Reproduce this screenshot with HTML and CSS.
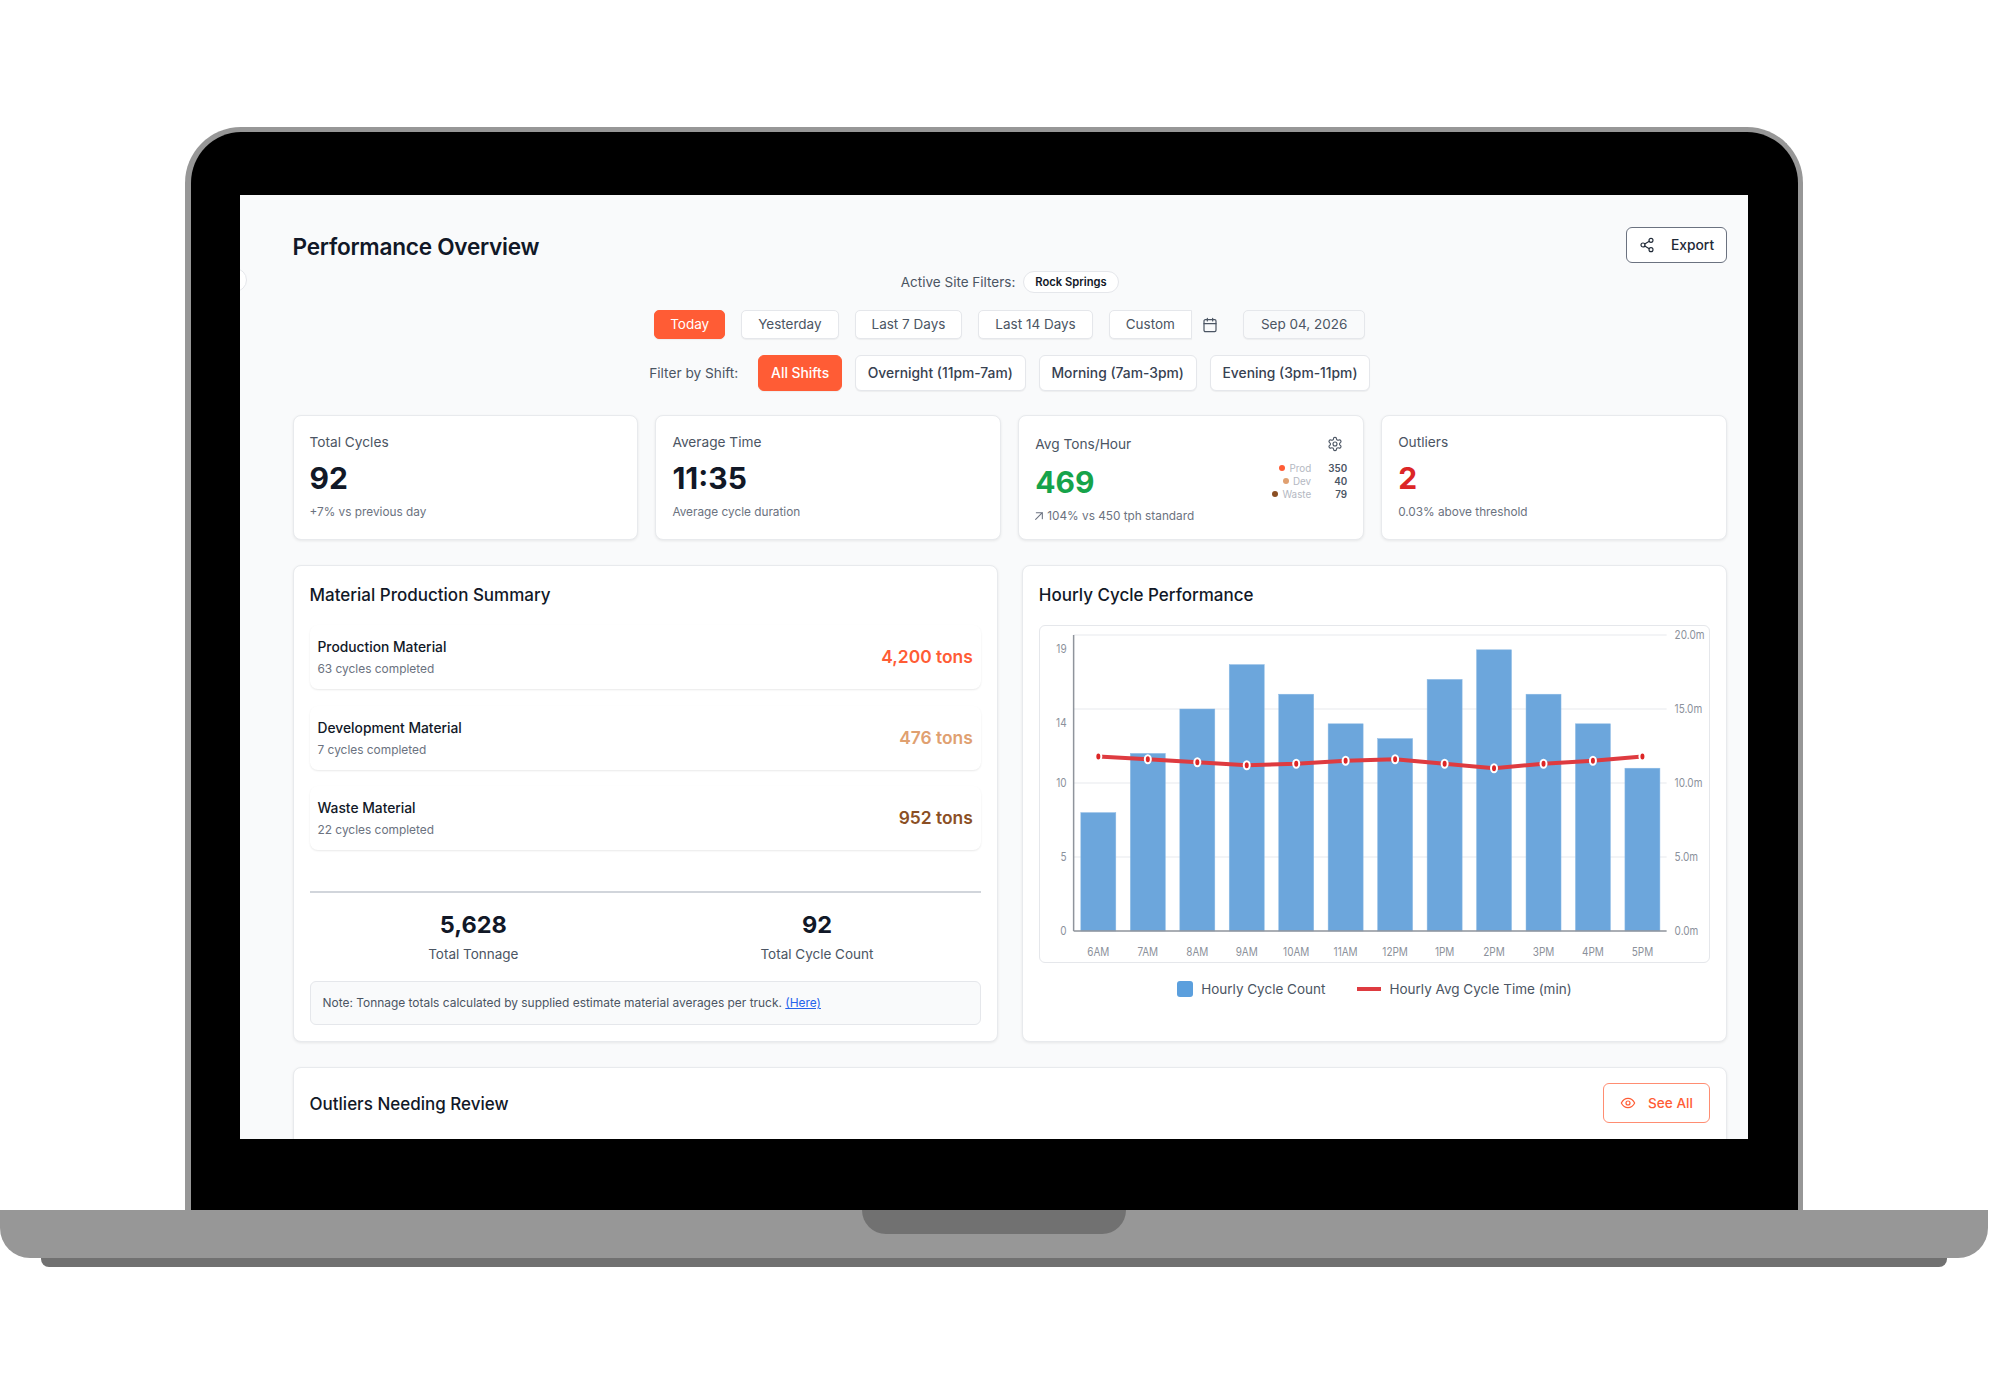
FILE: index.html
```html
<!DOCTYPE html>
<html lang="en">
<head>
    <meta charset="UTF-8">
    <meta name="viewport" content="width=device-width, initial-scale=1.0">
    <title>Performance Overview</title>
    <link rel="stylesheet" href="styles.css">
</head>
<body>
    <div class="laptop">
        <div class="lid">
            <div class="screen">
                <span class="sidebar-toggle"></span>

                <div class="page-header">
                    <h1>Performance Overview</h1>
                    <button class="export-btn">
                        <svg class="icon" viewBox="0 0 24 24"><circle cx="18" cy="5" r="3"/><circle cx="6" cy="12" r="3"/><circle cx="18" cy="19" r="3"/><path d="M8.59 13.51l6.83 3.98M15.41 6.51l-6.82 3.98"/></svg>
                        Export
                    </button>
                </div>

                <div class="site-filters">
                    <span>Active Site Filters:</span>
                    <span class="site-pill">Rock Springs</span>
                </div>

                <div class="date-filters">
                    <button class="filter-btn today-btn active">Today</button>
                    <button class="filter-btn">Yesterday</button>
                    <button class="filter-btn">Last 7 Days</button>
                    <button class="filter-btn">Last 14 Days</button>
                    <div class="custom-range">
                        <button class="filter-btn custom-btn">Custom</button>
                        <svg class="icon calendar" viewBox="0 0 24 24"><rect x="3" y="4" width="18" height="18" rx="2"/><path d="M16 2v4M8 2v4M3 10h18"/></svg>
                        <button class="filter-btn date-btn">Sep 04, 2026</button>
                    </div>
                </div>

                <div class="shift-filters">
                    <span class="shift-label">Filter by Shift:</span>
                    <button class="shift-btn active">All Shifts</button>
                    <button class="shift-btn">Overnight (11pm-7am)</button>
                    <button class="shift-btn">Morning (7am-3pm)</button>
                    <button class="shift-btn">Evening (3pm-11pm)</button>
                </div>

                <div class="stat-grid">
                    <div class="stat-card">
                        <div class="stat-label">Total Cycles</div>
                        <div class="stat-value">92</div>
                        <div class="stat-sub">+7% vs previous day</div>
                    </div>
                    <div class="stat-card">
                        <div class="stat-label">Average Time</div>
                        <div class="stat-value">11:35</div>
                        <div class="stat-sub">Average cycle duration</div>
                    </div>
                    <div class="stat-card tons-card">
                        <div class="tons-head">
                            <div class="stat-label">Avg Tons/Hour</div>
                            <svg class="icon gear" viewBox="0 0 24 24"><path d="M12.22 2h-.44a2 2 0 0 0-2 2v.18a2 2 0 0 1-1 1.73l-.43.25a2 2 0 0 1-2 0l-.15-.08a2 2 0 0 0-2.73.73l-.22.38a2 2 0 0 0 .73 2.73l.15.1a2 2 0 0 1 1 1.72v.51a2 2 0 0 1-1 1.74l-.15.09a2 2 0 0 0-.73 2.73l.22.38a2 2 0 0 0 2.73.73l.15-.08a2 2 0 0 1 2 0l.43.25a2 2 0 0 1 1 1.73V20a2 2 0 0 0 2 2h.44a2 2 0 0 0 2-2v-.18a2 2 0 0 1 1-1.73l.43-.25a2 2 0 0 1 2 0l.15.08a2 2 0 0 0 2.73-.73l.22-.39a2 2 0 0 0-.73-2.73l-.15-.08a2 2 0 0 1-1-1.74v-.5a2 2 0 0 1 1-1.74l.15-.09a2 2 0 0 0 .73-2.73l-.22-.38a2 2 0 0 0-2.73-.73l-.15.08a2 2 0 0 1-2 0l-.43-.25a2 2 0 0 1-1-1.73V4a2 2 0 0 0-2-2z"/><circle cx="12" cy="12" r="3"/></svg>
                        </div>
                        <div class="tons-row">
                            <div class="stat-value green">469</div>
                            <div class="tons-table">
                                <span class="tons-name"><i class="dot prod"></i>Prod</span><b>350</b>
                                <span class="tons-name"><i class="dot dev"></i>Dev</span><b>40</b>
                                <span class="tons-name"><i class="dot waste"></i>Waste</span><b>79</b>
                            </div>
                        </div>
                        <div class="stat-sub tons-sub">
                            <svg class="icon trend" viewBox="6 6 12 12"><path d="M7 17L17 7M8 7h9v9"/></svg>
                            104% vs 450 tph standard
                        </div>
                    </div>
                    <div class="stat-card">
                        <div class="stat-label">Outliers</div>
                        <div class="stat-value red">2</div>
                        <div class="stat-sub">0.03% above threshold</div>
                    </div>
                </div>

                <div class="panel-grid">
                    <div class="panel">
                        <h2>Material Production Summary</h2>
                        <div class="material-list">
                            <div class="material-row">
                                <div>
                                    <div class="material-name">Production Material</div>
                                    <div class="material-sub">63 cycles completed</div>
                                </div>
                                <div class="material-tons prod-text">4,200 tons</div>
                            </div>
                            <div class="material-row">
                                <div>
                                    <div class="material-name">Development Material</div>
                                    <div class="material-sub">7 cycles completed</div>
                                </div>
                                <div class="material-tons dev-text">476 tons</div>
                            </div>
                            <div class="material-row">
                                <div>
                                    <div class="material-name">Waste Material</div>
                                    <div class="material-sub">22 cycles completed</div>
                                </div>
                                <div class="material-tons waste-text">952 tons</div>
                            </div>
                        </div>
                        <div class="totals">
                            <div>
                                <div class="total-value">5,628</div>
                                <div class="total-label">Total Tonnage</div>
                            </div>
                            <div>
                                <div class="total-value">92</div>
                                <div class="total-label">Total Cycle Count</div>
                            </div>
                        </div>
                        <div class="note">Note: Tonnage totals calculated by supplied estimate material averages per truck. <a href="#">(Here)</a></div>
                    </div>

                    <div class="panel">
                        <h2>Hourly Cycle Performance</h2>
                        <div class="chart-box">
                            <svg class="chart" viewBox="0 0 668 336">
                                <g transform="translate(0,1)">
                                    <path class="grid-line" d="M33 8H626M33 82H626M33 156H626M33 230H626"/>
                                    <g class="bars">
                                        <rect x="40.2" y="185.6" width="35" height="118.4"/>
                                        <rect x="89.7" y="126.4" width="35" height="177.6"/>
                                        <rect x="139.2" y="82" width="35" height="222"/>
                                        <rect x="188.6" y="37.6" width="35" height="266.4"/>
                                        <rect x="238.1" y="67.2" width="35" height="236.8"/>
                                        <rect x="287.5" y="96.8" width="35" height="207.2"/>
                                        <rect x="337" y="111.6" width="35" height="192.4"/>
                                        <rect x="386.5" y="52.4" width="35" height="251.6"/>
                                        <rect x="435.9" y="22.8" width="35" height="281.2"/>
                                        <rect x="485.4" y="67.2" width="35" height="236.8"/>
                                        <rect x="534.8" y="96.8" width="35" height="207.2"/>
                                        <rect x="584.3" y="141.2" width="35" height="162.8"/>
                                    </g>
                                    <path class="axis-line" d="M33 8V304M33 304H626"/>
                                    <polyline class="trend-line" points="57.7,129.4 107.2,132.3 156.7,135.3 206.1,138.2 255.6,136.8 305,133.8 354.5,132.3 404,136.8 453.4,141.2 502.9,136.8 552.3,133.8 601.8,129.4"/>
                                    <g class="points">
                                        <ellipse cx="57.7" cy="129.4" rx="3" ry="4"/>
                                        <ellipse cx="107.2" cy="132.3" rx="3" ry="4"/>
                                        <ellipse cx="156.7" cy="135.3" rx="3" ry="4"/>
                                        <ellipse cx="206.1" cy="138.2" rx="3" ry="4"/>
                                        <ellipse cx="255.6" cy="136.8" rx="3" ry="4"/>
                                        <ellipse cx="305" cy="133.8" rx="3" ry="4"/>
                                        <ellipse cx="354.5" cy="132.3" rx="3" ry="4"/>
                                        <ellipse cx="404" cy="136.8" rx="3" ry="4"/>
                                        <ellipse cx="453.4" cy="141.2" rx="3" ry="4"/>
                                        <ellipse cx="502.9" cy="136.8" rx="3" ry="4"/>
                                        <ellipse cx="552.3" cy="133.8" rx="3" ry="4"/>
                                        <ellipse cx="601.8" cy="129.4" rx="3" ry="4"/>
                                    </g>
                                    <g class="y-left">
                                        <text x="26" y="25">19</text>
                                        <text x="26" y="99">14</text>
                                        <text x="26" y="159">10</text>
                                        <text x="26" y="233">5</text>
                                        <text x="26" y="307">0</text>
                                    </g>
                                    <g class="y-right">
                                        <text x="634" y="11">20.0m</text>
                                        <text x="634" y="85">15.0m</text>
                                        <text x="634" y="159">10.0m</text>
                                        <text x="634" y="233">5.0m</text>
                                        <text x="634" y="307">0.0m</text>
                                    </g>
                                    <g class="x-labels">
                                        <text x="57.7" y="328">6AM</text>
                                        <text x="107.2" y="328">7AM</text>
                                        <text x="156.7" y="328">8AM</text>
                                        <text x="206.1" y="328">9AM</text>
                                        <text x="255.6" y="328">10AM</text>
                                        <text x="305" y="328">11AM</text>
                                        <text x="354.5" y="328">12PM</text>
                                        <text x="404" y="328">1PM</text>
                                        <text x="453.4" y="328">2PM</text>
                                        <text x="502.9" y="328">3PM</text>
                                        <text x="552.3" y="328">4PM</text>
                                        <text x="601.8" y="328">5PM</text>
                                    </g>
                                </g>
                            </svg>
                        </div>
                        <div class="legend">
                            <span class="legend-item"><i class="swatch-bar"></i>Hourly Cycle Count</span>
                            <span class="legend-item"><i class="swatch-line"></i>Hourly Avg Cycle Time (min)</span>
                        </div>
                    </div>
                </div>

                <div class="panel outliers">
                    <h2>Outliers Needing Review</h2>
                    <button class="see-all">
                        <svg class="icon" viewBox="0 0 24 24"><path d="M2 12s3.6-7 10-7 10 7 10 7-3.6 7-10 7-10-7-10-7z"/><circle cx="12" cy="12" r="3"/></svg>
                        See All
                    </button>
                </div>
            </div>
        </div>
        <div class="base"><div class="notch"></div></div>
        <div class="foot"></div>
    </div>
</body>
</html>
```

FILE: styles.css
```css
/* General Styling */
body {
    font-family: Inter, "Liberation Sans", sans-serif;
    background-color: #ffffff;
    color: #111827;
    margin: 0;
    padding: 0;
}

button {
    font-family: inherit;
    cursor: pointer;
}

.icon {
    fill: none;
    stroke: currentColor;
    stroke-width: 2;
    stroke-linecap: round;
    stroke-linejoin: round;
    flex-shrink: 0;
}

/* Laptop Frame */
.laptop {
    padding-top: 127px;
}

.lid {
    box-sizing: border-box;
    width: 1618px;
    height: 1083px;
    margin-left: 185px;
    padding: 63px 50px 71px 49px;
    background-color: #000000;
    border: solid #979797;
    border-width: 5px 5px 0 6px;
    border-radius: 56px 56px 0 0;
}

.base {
    position: relative;
    width: 1988px;
    height: 48px;
    background-color: #979797;
    border-radius: 0 0 30px 30px;
}

.notch {
    position: absolute;
    top: 0;
    left: 862px;
    width: 264px;
    height: 24px;
    background-color: #717171;
    border-radius: 0 0 24px 24px;
}

.foot {
    width: 1906px;
    height: 9px;
    margin-left: 41px;
    background-color: #717171;
    border-radius: 0 0 8px 8px;
}

/* Screen */
.screen {
    position: relative;
    box-sizing: border-box;
    height: 944px;
    padding: 32px 21px 0 52.5px;
    background-color: #f9fafb;
    overflow: hidden;
}

.sidebar-toggle {
    position: absolute;
    top: 73px;
    left: -17px;
    width: 22px;
    height: 22px;
    background-color: #ffffff;
    border: 1px solid #e5e7eb;
    border-radius: 50%;
}

/* Header */
.page-header {
    display: flex;
    justify-content: space-between;
    align-items: center;
    height: 36px;
}

h1 {
    margin: 2px 0 0;
    font-size: 22.6px;
    font-weight: 600;
    letter-spacing: -0.25px;
}

.export-btn {
    display: flex;
    align-items: center;
    gap: 16px;
    box-sizing: border-box;
    width: 101px;
    height: 36px;
    padding: 0 12px;
    background-color: #ffffff;
    color: #1f2937;
    border: 1px solid #6b7280;
    border-radius: 6px;
    font-size: 13.8px;
    font-weight: 500;
}

.export-btn .icon {
    width: 16px;
    height: 16px;
    stroke-width: 1.7;
}

/* Filters */
.site-filters {
    display: flex;
    justify-content: center;
    align-items: center;
    gap: 8px;
    margin-top: 8px;
    height: 22px;
    font-size: 13.5px;
    color: #4b5563;
}

.site-pill {
    display: flex;
    align-items: center;
    box-sizing: border-box;
    height: 22px;
    padding: 0 11px;
    background-color: #ffffff;
    color: #111827;
    border: 1px solid #e5e7eb;
    border-radius: 11px;
    font-size: 11.2px;
    font-weight: 600;
}

.date-filters,
.shift-filters {
    display: flex;
    justify-content: center;
    align-items: center;
}

.date-filters {
    gap: 16px;
    margin-top: 17px;
}

.filter-btn {
    box-sizing: border-box;
    height: 29px;
    padding: 0 16px 1px;
    background-color: #ffffff;
    color: #4b5563;
    border: 1px solid #e5e7eb;
    border-radius: 5px;
    box-shadow: 0 1px 1px rgba(0, 0, 0, 0.05);
    font-size: 13.5px;
}

.today-btn {
    padding: 0 15px 1px;
}

.filter-btn.active,
.shift-btn.active {
    background-color: #ff5c35;
    border-color: #ff5c35;
    color: #ffffff;
}

.custom-range {
    display: flex;
    align-items: center;
}

.custom-btn {
    border-radius: 5px 0 0 5px;
}

.calendar {
    width: 16px;
    height: 16px;
    margin: 0 25px 0 10px;
    color: #4b5563;
    stroke-width: 1.8;
}

.date-btn {
    padding: 0 17px 1px;
    background-color: #f9fafb;
}

.shift-filters {
    gap: 13px;
    margin-top: 16px;
}

.shift-label {
    margin-right: 7px;
    font-size: 13.7px;
    color: #4b5563;
}

.shift-btn {
    box-sizing: border-box;
    height: 36px;
    padding: 0 11.8px 1px;
    background-color: #ffffff;
    color: #374151;
    border: 1px solid #e5e7eb;
    border-radius: 6px;
    box-shadow: 0 1px 1px rgba(0, 0, 0, 0.05);
    font-size: 13.85px;
    font-weight: 500;
}

/* Stat Cards */
.stat-grid {
    display: grid;
    grid-template-columns: repeat(4, 1fr);
    gap: 17px;
    margin-top: 24px;
}

.stat-card {
    box-sizing: border-box;
    height: 124.5px;
    padding: 16px;
    background-color: #ffffff;
    border: 1px solid #e8eaed;
    border-radius: 8px;
    box-shadow: 0 1px 3px rgba(0, 0, 0, 0.08);
}

.stat-label {
    font-size: 13.7px;
    line-height: 20px;
    color: #4b5563;
}

.stat-value {
    margin-top: 8px;
    font-size: 30px;
    line-height: 36px;
    font-weight: 700;
}

.stat-sub {
    margin-top: 8px;
    font-size: 11.8px;
    line-height: 16px;
    color: #6b7280;
}

.green {
    color: #16a34a;
}

.red {
    color: #dc2626;
}

.tons-head {
    display: flex;
    justify-content: space-between;
    align-items: center;
    padding-top: 2px;
}

.gear {
    width: 16px;
    height: 16px;
    margin-right: 4px;
    color: #4b5563;
    stroke-width: 1.7;
}

.tons-row {
    display: flex;
    justify-content: space-between;
    align-items: center;
    margin-top: 8.5px;
    height: 39px;
}

.tons-row .stat-value {
    margin-top: 0;
}

.tons-table {
    display: grid;
    grid-template-columns: auto 36px;
    margin-bottom: 2px;
    font-size: 9.8px;
    line-height: 13px;
}

.tons-table b {
    text-align: right;
    color: #4b5563;
    font-weight: 600;
}

.tons-name {
    display: flex;
    justify-content: flex-end;
    align-items: center;
    gap: 4px;
    color: #b4b8c2;
}

.dot {
    width: 6px;
    height: 6px;
    border-radius: 50%;
}

.dot.prod {
    background-color: #ff5c35;
}

.dot.dev {
    background-color: #e0a070;
}

.dot.waste {
    background-color: #8b4f24;
}

.tons-sub {
    display: flex;
    align-items: center;
    gap: 4px;
    margin-top: 6.5px;
}

.trend {
    width: 8px;
    height: 8px;
    stroke-width: 1.6;
}

/* Panels */
.panel-grid {
    display: grid;
    grid-template-columns: repeat(2, 1fr);
    gap: 24px;
    margin-top: 25.5px;
}

.panel {
    padding: 17px 16px 16px;
    background-color: #ffffff;
    border: 1px solid #e8eaed;
    border-radius: 8px;
    box-shadow: 0 1px 3px rgba(0, 0, 0, 0.08);
}

h2 {
    margin: 0;
    font-size: 17px;
    line-height: 24px;
    font-weight: 500;
}

/* Material Summary */
.material-list {
    display: flex;
    flex-direction: column;
    gap: 16.5px;
    margin-top: 18px;
}

.material-row {
    display: flex;
    justify-content: space-between;
    align-items: center;
    box-sizing: border-box;
    height: 64px;
    padding: 2px 8px 0;
    border-radius: 8px;
    box-shadow: 0 1px 2px rgba(0, 0, 0, 0.09);
}

.material-name {
    font-size: 13.8px;
    line-height: 20px;
    font-weight: 500;
}

.material-sub {
    margin-top: 2px;
    font-size: 11.9px;
    line-height: 20px;
    color: #6b7280;
}

.material-tons {
    margin-bottom: 3px;
    font-size: 17.4px;
    font-weight: 600;
}

.prod-text {
    color: #ff5c35;
}

.dev-text {
    color: #e0a070;
}

.waste-text {
    color: #8b4f24;
}

.totals {
    display: grid;
    grid-template-columns: repeat(2, 1fr);
    gap: 16px;
    margin-top: 41px;
    padding-top: 16px;
    border-top: 2px solid #d1d5db;
    text-align: center;
}

.total-value {
    font-size: 23.5px;
    line-height: 32px;
    font-weight: 700;
}

.total-label {
    margin-top: 3px;
    margin-bottom: 1px;
    font-size: 13.5px;
    line-height: 20px;
    color: #4b5563;
}

.note {
    box-sizing: border-box;
    height: 44px;
    margin-top: 16px;
    padding: 0 12px;
    background-color: #f9fafb;
    border: 1px solid #e5e7eb;
    border-radius: 6px;
    font-size: 11.95px;
    line-height: 42px;
    color: #4b5563;
}

.note a {
    color: #2563eb;
}

/* Chart */
.chart-box {
    margin-top: 18px;
    background-color: #ffffff;
    border: 1px solid #e5e7eb;
    border-radius: 6px;
}

.chart {
    display: block;
    width: 100%;
    height: 336px;
}

.chart text {
    font-size: 10px;
    fill: #8b919b;
    transform-box: fill-box;
    transform-origin: center;
    transform: scaleY(1.2);
}

.grid-line {
    fill: none;
    stroke: #f0f1f3;
    stroke-width: 1.5;
}

.axis-line {
    fill: none;
    stroke: #8f949c;
    stroke-width: 1.5;
}

.bars rect {
    fill: #6ca6dc;
    stroke: #8dbbe5;
    stroke-width: 0.5;
}

.trend-line {
    fill: none;
    stroke: #de3b40;
    stroke-width: 4;
}

.points ellipse {
    fill: #dc2626;
    stroke: #ffffff;
    stroke-width: 2;
}

.y-left text {
    text-anchor: end;
}

.x-labels text {
    text-anchor: middle;
}

.legend {
    display: flex;
    justify-content: center;
    gap: 32px;
    margin-top: 16px;
    font-size: 13.5px;
    line-height: 20px;
    color: #4b5563;
}

.legend-item {
    display: flex;
    align-items: center;
    gap: 8px;
}

.swatch-bar {
    width: 16px;
    height: 16px;
    background-color: #5b9fdd;
    border-radius: 3px;
}

.swatch-line {
    width: 24px;
    height: 4px;
    background-color: #de3b40;
}

/* Outliers */
.outliers {
    display: flex;
    justify-content: space-between;
    align-items: flex-start;
    box-sizing: border-box;
    height: 120px;
    margin-top: 25px;
    padding-top: 15px;
}

.outliers h2 {
    line-height: 42px;
}

.see-all {
    display: flex;
    align-items: center;
    gap: 12px;
    box-sizing: border-box;
    width: 107px;
    height: 40px;
    padding: 0 16px;
    background-color: #ffffff;
    color: #ff5c35;
    border: 1px solid #ff8d72;
    border-radius: 6px;
    font-size: 13.6px;
    font-weight: 500;
}

.see-all .icon {
    width: 16px;
    height: 16px;
    stroke-width: 1.8;
}
```
